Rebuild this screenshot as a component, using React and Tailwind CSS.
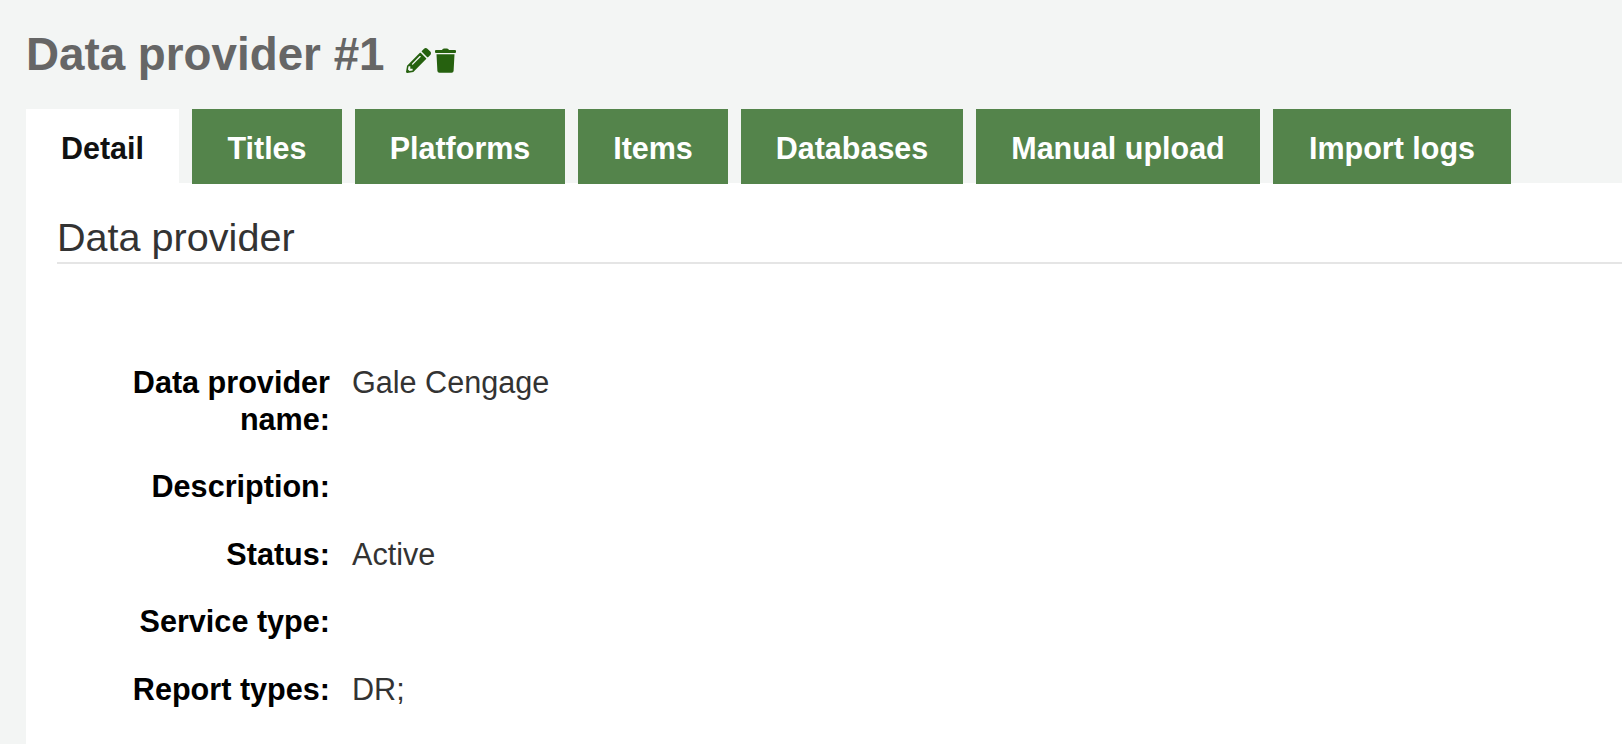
import React from "react";
import { FaPencilAlt } from "react-icons/fa";

const tabs = [
  ["Titles", "w-[150px]"],
  ["Platforms", "w-[210px]"],
  ["Items", "w-[150px]"],
  ["Databases", "w-[222px]"],
  ["Manual upload", "w-[284px]"],
  ["Import logs", "w-[238px]"],
];

const rows = [
  ["Data provider name:", "Gale Cengage"],
  ["Description:", ""],
  ["Status:", "Active"],
  ["Service type:", ""],
  ["Report types:", "DR;"],
];

function TrashIcon() {
  return (
    <svg viewBox="0 0 21 25" className="h-[25px] w-[21px]" fill="currentColor" aria-hidden="true">
      <path d="M7 2 Q7.5 0.5 9 0.5 h3 q1.5 0 2 1.5 z" />
      <rect x="0" y="2" width="21" height="3" rx="1" />
      <path d="M1.5 6.2 h18 l-0.9 16.8 a2 2 0 0 1 -2 1.8 h-12.2 a2 2 0 0 1 -2 -1.8 z" />
    </svg>
  );
}

export default function App() {
  return (
    <div className="h-[744px] overflow-hidden bg-[#f3f5f4] font-['Liberation_Sans',Arial,sans-serif]">
      <div className="flex h-[109px] items-start pl-[26px] pt-[27px]">
        <h1 className="text-[45.75px] leading-[56px] font-bold text-[#666666]">Data provider #1</h1>
        <div className="ml-[21px] mt-[21px] flex items-center gap-[4px] text-[#26610f]">
          <FaPencilAlt className="h-[25px] w-[25px]" />
          <TrashIcon />
        </div>
      </div>
      <div className="ml-[26px] flex h-[75px] gap-[13px]">
        <div className="flex w-[153px] items-center justify-center bg-white pt-[5px] text-[30.5px] font-bold text-[#111111]">Detail</div>
        {tabs.map(([label, width]) => (
          <div key={label} className={`flex ${width} items-center justify-center bg-[#54844b] pt-[5px] text-[30.5px] font-bold text-white`}>
            {label}
          </div>
        ))}
      </div>
      <div className="-mt-[1px] ml-[26px] h-[600px] bg-white pl-[31px] pt-[30px]">
        <h2 className="border-b-2 border-[#e5e5e5] pb-[1px] text-[39.6px] leading-[48px] text-[#333333]">Data provider</h2>
        <div className="flex flex-col gap-[31px] pt-[100px] text-[30.6px] leading-[36.5px]">
          {rows.map(([label, value]) => (
            <div key={label} className="flex gap-[22px]">
              <div className="w-[273px] pl-[60px] text-right font-bold text-black">{label}</div>
              <div className="text-[#333333]">{value}</div>
            </div>
          ))}
        </div>
      </div>
    </div>
  );
}
